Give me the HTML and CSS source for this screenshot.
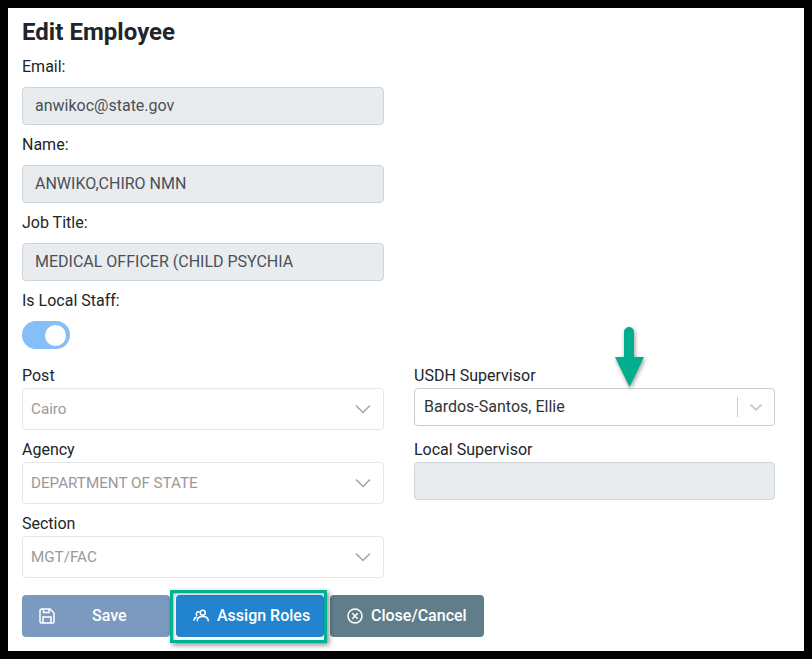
FILE: index.html
```html
<!DOCTYPE html>
<html lang="en">
<head>
<meta charset="utf-8">
<title>Edit Employee</title>
<link rel="stylesheet" href="styles.css">
</head>
<body>
<main class="frame">
  <h1 class="title">Edit Employee</h1>
  <div class="stack">
    <label class="label">Email:</label>
    <div class="input">anwikoc@state.gov</div>
    <label class="label">Name:</label>
    <div class="input">ANWIKO,CHIRO NMN</div>
    <label class="label">Job Title:</label>
    <div class="input">MEDICAL OFFICER (CHILD PSYCHIA</div>
    <label class="label">Is Local Staff:</label>
    <div class="toggle"><span class="knob"></span></div>
  </div>
  <div class="columns">
    <div class="col">
      <label class="label-tight">Post</label>
      <div class="select">Cairo<svg class="chev" viewBox="0 0 16 10"><path d="M1 1.500l7 7 7-7" fill="none" stroke="#a3a3a3" stroke-width="1.500"/></svg></div>
      <label class="label-tight">Agency</label>
      <div class="select">DEPARTMENT OF STATE<svg class="chev" viewBox="0 0 16 10"><path d="M1 1.500l7 7 7-7" fill="none" stroke="#a3a3a3" stroke-width="1.500"/></svg></div>
      <label class="label-tight">Section</label>
      <div class="select">MGT/FAC<svg class="chev" viewBox="0 0 16 10"><path d="M1 1.500l7 7 7-7" fill="none" stroke="#a3a3a3" stroke-width="1.500"/></svg></div>
    </div>
    <div class="col">
      <label class="label-tight">USDH Supervisor</label>
      <div class="combo">
        <span class="combo-value">Bardos-Santos, Ellie</span>
        <span class="combo-sep"></span>
        <svg class="combo-chev" viewBox="0 0 20 20"><path d="M4.500 7.600c.4-.4 1-.4 1.400 0L10 11.500l4.100-3.900c.4-.4 1-.4 1.400 0 .4.400.4 1 0 1.400l-4.800 4.600c-.4.400-1 .4-1.400 0L4.500 9c-.4-.4-.4-1 0-1.400z" fill="#ccc"/></svg>
      </div>
      <label class="label-tight">Local Supervisor</label>
      <div class="input input-empty"></div>
    </div>
  </div>
  <div class="actions">
    <button class="btn btn-save">
      <svg class="icon" viewBox="0 0 16 16"><path d="M2.500 1h8.500l4 4v8.500c0 .8-.7 1.500-1.500 1.500h-11c-.8 0-1.500-.7-1.500-1.500v-11C1 1.700 1.700 1 2.500 1z M4.500 1v3.500h5.500V1 M4 15V9h8v6" fill="none" stroke="#fff" stroke-width="1.500"/></svg>
      <span class="save-text">Save</span>
    </button>
    <button class="btn btn-assign">
      <svg class="icon" viewBox="0 0 16 16"><g fill="none" stroke="#fff" stroke-width="1.500" stroke-linecap="round"><circle cx="9.700" cy="4.800" r="2.500"/><path d="M4.300 12.800c0-2.800 2.300-4.300 5.400-4.300s5.500 1.500 5.500 4.300"/><path d="M6 3.800a2.200 2.200 0 0 0-2.200 3.600M3.300 9.200C1.800 9.700 1 10.800 1 12.300"/></g></svg>
      <span>Assign Roles</span>
    </button>
    <button class="btn btn-close">
      <svg class="icon" viewBox="0 0 16 16"><g fill="none" stroke="#fff" stroke-width="1.500"><circle cx="8" cy="8" r="7"/><path d="M5.300 5.300l5.400 5.400M10.700 5.300l-5.400 5.400"/></g></svg>
      <span>Close/Cancel</span>
    </button>
    <span class="highlight"></span>
  </div>
  <svg class="arrow" viewBox="0 0 32 62"><path d="M10 6a5 5 0 0 1 10 0v25h10L15.500 61 1 31h9z" fill="#00ad8c"/></svg>
</main>
</body>
</html>
```
FILE: styles.css
```css
* { box-sizing: border-box; }
html, body { margin: 0; height: 100%; background: #000; }
body { padding: 8px; font-family: Roboto, "Liberation Sans", sans-serif; font-size: 16px; color: #212529; }
.frame { position: relative; width: 796px; height: 643px; background: #fff; padding: 10px 14px 0; overflow: hidden; }
.title { margin: 0 0 8px; font-size: 24px; line-height: 29px; font-weight: 700; letter-spacing: .04px; }
.stack { width: 362px; }
.label { display: block; height: 24px; line-height: 24px; margin-bottom: 8px; }
.input { height: 38px; margin-bottom: 8px; padding: 0 12px; line-height: 36px; background: #e9ecef; border: 1px solid #ced4da; border-radius: 4px; color: #495057; }
.input-empty { margin-bottom: 0; }
.toggle { width: 48px; height: 28px; padding: 3.500px 4px; display: flex; justify-content: flex-end; background: #86bff7; border-radius: 14px; }
.knob { width: 21px; height: 21px; border-radius: 50%; background: #fff; }
.columns { display: grid; grid-template-columns: 362px 361px; column-gap: 30px; margin-top: 15px; }
.label-tight { display: block; height: 24px; line-height: 24px; }
.select { display: flex; align-items: center; justify-content: space-between; height: 42px; margin-bottom: 8px; padding: 0 12px 0 8px; border: 1px solid #e6e6e6; border-radius: 4px; color: #999; background: #fff; font-size: 15.200px; }
.chev { width: 16px; height: 10px; }
.combo { display: flex; align-items: center; height: 38px; margin-bottom: 12px; padding-left: 9px; border: 1px solid #ccc; border-radius: 4px; }
.combo-value { flex: 1; color: #333; margin-bottom: 2px; }
.combo-sep { width: 1px; height: 20px; background: #ccc; }
.combo-chev { width: 20px; height: 20px; margin: 0 8px; }
.actions { position: relative; display: flex; gap: 6px; margin-top: 9px; }
.btn { display: flex; align-items: center; height: 42px; border: 0; border-radius: 4px; color: #fff; font: 500 16px Roboto, "Liberation Sans", sans-serif; padding: 0; }
.btn span { margin-bottom: 2px; }
.icon { width: 16px; height: 16px; flex: none; margin-right: 8px; }
.btn-save { width: 148px; padding-left: 17px; background: #7c99bf; }
.save-text { margin-left: 29px; }
.btn-assign { width: 148px; padding-left: 17px; background: #2284cf; }
.btn-close { width: 154px; padding-left: 17px; background: #607d8a; }
.highlight { position: absolute; left: 148px; top: -5px; width: 157px; height: 53px; border: 3px solid #00b294; box-shadow: 2px 2px 5px rgba(0,0,0,.45), inset 1px 1px 3px rgba(0,0,0,.35); }
.arrow { position: absolute; left: 606px; top: 318px; width: 32px; height: 62px; filter: drop-shadow(1px 2px 2px rgba(0,0,0,.4)); }
```
